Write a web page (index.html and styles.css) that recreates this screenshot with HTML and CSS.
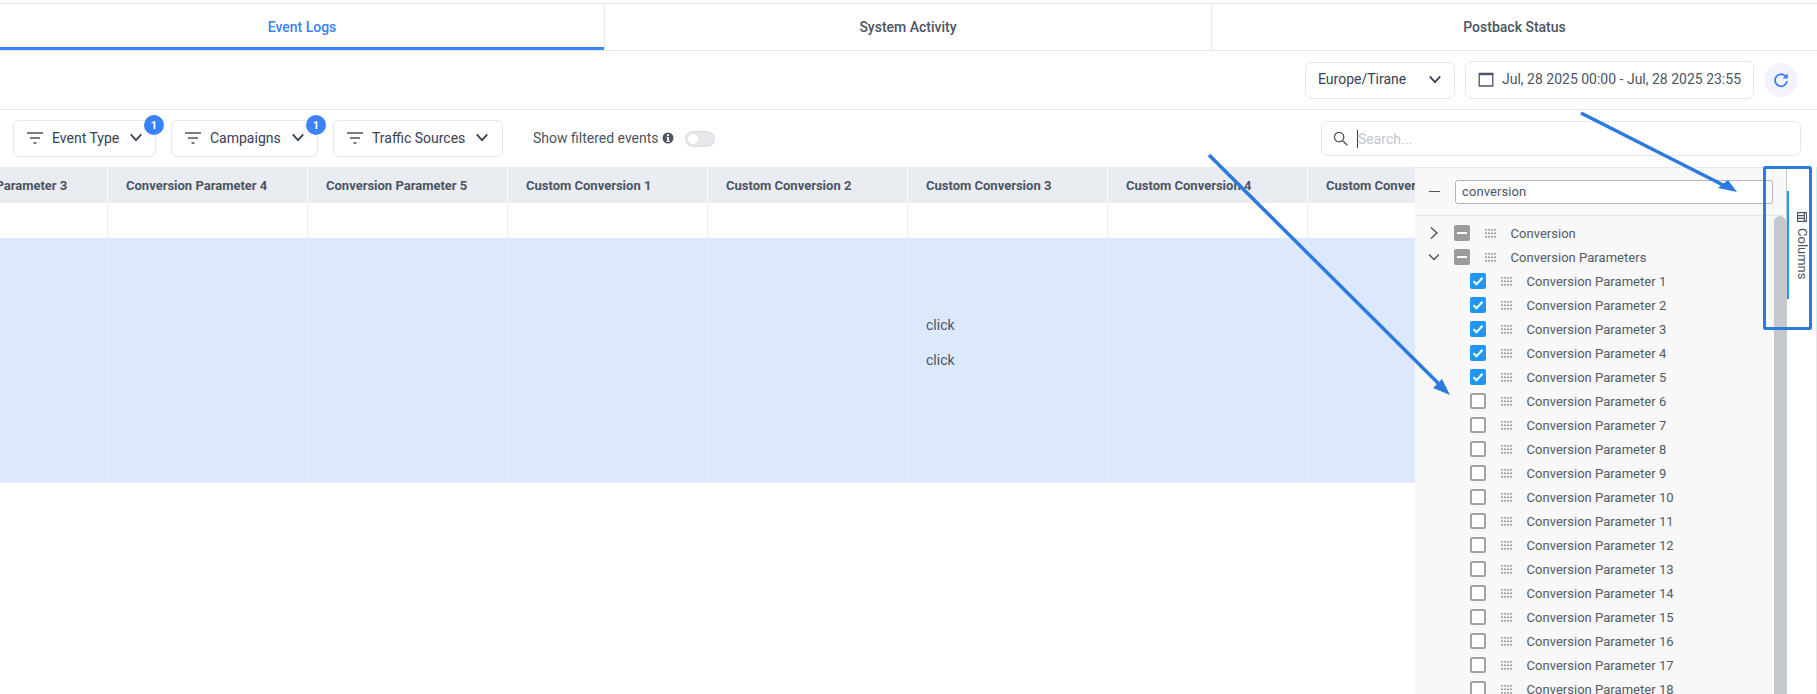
FILE: index.html
```html
<!DOCTYPE html>
<html lang="en">
<head>
<meta charset="utf-8">
<title>Event Logs</title>
<link rel="stylesheet" href="styles.css">
</head>
<body>
<svg class="defs" width="0" height="0" aria-hidden="true">
  <symbol id="grip" viewBox="0 0 11 9"><g fill="#9ca0a6"><rect x="0" y="0" width="2" height="1.6"/><rect x="3" y="0" width="2" height="1.6"/><rect x="6" y="0" width="2" height="1.6"/><rect x="9" y="0" width="2" height="1.6"/><rect x="0" y="3.5" width="2" height="1.6"/><rect x="3" y="3.5" width="2" height="1.6"/><rect x="6" y="3.5" width="2" height="1.6"/><rect x="9" y="3.5" width="2" height="1.6"/><rect x="0" y="7" width="2" height="1.6"/><rect x="3" y="7" width="2" height="1.6"/><rect x="6" y="7" width="2" height="1.6"/><rect x="9" y="7" width="2" height="1.6"/></g></symbol>
  <symbol id="chev" viewBox="0 0 16 10"><path d="M2 1.5 8 8l6-6.500" fill="none" stroke="#374151" stroke-width="2"/></symbol>
  <symbol id="filter" viewBox="0 0 16 12"><path d="M0 1h16M3 6h10M6.500 11h3" fill="none" stroke="#4b5563" stroke-width="1.500"/></symbol>
</svg>
<div class="page">
  <nav class="tabs">
    <div class="tab tab-active">Event Logs</div>
    <div class="tab">System Activity</div>
    <div class="tab">Postback Status</div>
  </nav>
  <div class="datebar">
    <div class="box tz">Europe/Tirane<svg class="chev"><use href="#chev"/></svg></div>
    <div class="box range">
      <svg class="cal" viewBox="0 0 16 16"><path d="M1.200 2.500h13.600v12.500H1.200z" fill="none" stroke="#4b5563" stroke-width="1.300"/><path d="M1.200 2h13.600v2.200H1.200z" fill="#4b5563"/></svg>
      <span>Jul, 28 2025 00:00 - Jul, 28 2025 23:55</span>
    </div>
    <div class="refresh"><svg viewBox="0 0 16 16" class="refresh-icon"><path d="M14 9.200A6 6 0 1 1 12.300 4" fill="none" stroke="#3b82f6" stroke-width="1.800"/><path d="M14.800 1.200v5.300H9.500z" fill="#3b82f6"/></svg></div>
  </div>
  <div class="filterbar">
    <div class="box filter f1"><svg class="filter-icon"><use href="#filter"/></svg>Event Type<svg class="chev"><use href="#chev"/></svg><span class="badge">1</span></div>
    <div class="box filter f2"><svg class="filter-icon"><use href="#filter"/></svg>Campaigns<svg class="chev"><use href="#chev"/></svg><span class="badge">1</span></div>
    <div class="box filter f3"><svg class="filter-icon"><use href="#filter"/></svg>Traffic Sources<svg class="chev"><use href="#chev"/></svg></div>
    <div class="show">Show filtered events<svg class="info" viewBox="0 0 12 12"><circle cx="6" cy="6" r="5.500" fill="#4b5563"/><rect x="5" y="2.200" width="2" height="1.800" fill="#fff"/><path d="M4.400 5h2.600v3.800h.8v1H4.400v-1h.8V6h-.8z" fill="#fff"/></svg><span class="toggle"><span class="knob"></span></span></div>
    <div class="box search">
      <svg class="search-icon" viewBox="0 0 16 16"><circle cx="6.500" cy="6.500" r="5" fill="none" stroke="#4b5563" stroke-width="1.400"/><path d="m10.300 10.300 5 5" stroke="#4b5563" stroke-width="1.500"/></svg>
      <span class="caret"></span><span class="placeholder">Search...</span>
    </div>
  </div>
  <div class="content">
    <div class="grid">
      <div class="row head">
        <div class="cell">Conversion Parameter 3</div>
        <div class="cell">Conversion Parameter 4</div>
        <div class="cell">Conversion Parameter 5</div>
        <div class="cell">Custom Conversion 1</div>
        <div class="cell">Custom Conversion 2</div>
        <div class="cell">Custom Conversion 3</div>
        <div class="cell">Custom Conversion 4</div>
        <div class="cell">Custom Conversion 5</div>
      </div>
      <div class="row blank">
        <div class="cell"></div><div class="cell"></div><div class="cell"></div><div class="cell"></div><div class="cell"></div><div class="cell"></div><div class="cell"></div><div class="cell"></div>
      </div>
      <div class="row selected">
        <div class="cell"></div><div class="cell"></div><div class="cell"></div><div class="cell"></div><div class="cell"></div>
        <div class="cell clicks"><p>click</p><p>click</p></div>
        <div class="cell"></div><div class="cell"></div>
      </div>
    </div>
    <aside class="panel">
      <div class="panel-head">
        <span class="dash"></span>
        <div class="panel-input">conversion</div>
      </div>
      <div class="panel-body">
        <div class="list">
          <div class="item group"><svg class="tree" viewBox="0 0 10 14"><path d="M2 1.500 8 7l-6 5.500" fill="none" stroke="#4b5563" stroke-width="1.400"/></svg><span class="check mixed"></span><svg class="grip"><use href="#grip"/></svg><span>Conversion</span></div>
          <div class="item group"><svg class="tree" viewBox="0 0 10 14"><path d="M0 4.500 5 9.500l5-5" fill="none" stroke="#4b5563" stroke-width="1.400"/></svg><span class="check mixed"></span><svg class="grip"><use href="#grip"/></svg><span>Conversion Parameters</span></div>
          <div class="item child"><span class="check on"><svg viewBox="0 0 16 16"><path d="m3.500 8.300 3 3 6-6.500" fill="none" stroke="#fff" stroke-width="2"/></svg></span><svg class="grip"><use href="#grip"/></svg><span>Conversion Parameter 1</span></div>
          <div class="item child"><span class="check on"><svg viewBox="0 0 16 16"><path d="m3.500 8.300 3 3 6-6.500" fill="none" stroke="#fff" stroke-width="2"/></svg></span><svg class="grip"><use href="#grip"/></svg><span>Conversion Parameter 2</span></div>
          <div class="item child"><span class="check on"><svg viewBox="0 0 16 16"><path d="m3.500 8.300 3 3 6-6.500" fill="none" stroke="#fff" stroke-width="2"/></svg></span><svg class="grip"><use href="#grip"/></svg><span>Conversion Parameter 3</span></div>
          <div class="item child"><span class="check on"><svg viewBox="0 0 16 16"><path d="m3.500 8.300 3 3 6-6.500" fill="none" stroke="#fff" stroke-width="2"/></svg></span><svg class="grip"><use href="#grip"/></svg><span>Conversion Parameter 4</span></div>
          <div class="item child"><span class="check on"><svg viewBox="0 0 16 16"><path d="m3.500 8.300 3 3 6-6.500" fill="none" stroke="#fff" stroke-width="2"/></svg></span><svg class="grip"><use href="#grip"/></svg><span>Conversion Parameter 5</span></div>
          <div class="item child"><span class="check"></span><svg class="grip"><use href="#grip"/></svg><span>Conversion Parameter 6</span></div>
          <div class="item child"><span class="check"></span><svg class="grip"><use href="#grip"/></svg><span>Conversion Parameter 7</span></div>
          <div class="item child"><span class="check"></span><svg class="grip"><use href="#grip"/></svg><span>Conversion Parameter 8</span></div>
          <div class="item child"><span class="check"></span><svg class="grip"><use href="#grip"/></svg><span>Conversion Parameter 9</span></div>
          <div class="item child"><span class="check"></span><svg class="grip"><use href="#grip"/></svg><span>Conversion Parameter 10</span></div>
          <div class="item child"><span class="check"></span><svg class="grip"><use href="#grip"/></svg><span>Conversion Parameter 11</span></div>
          <div class="item child"><span class="check"></span><svg class="grip"><use href="#grip"/></svg><span>Conversion Parameter 12</span></div>
          <div class="item child"><span class="check"></span><svg class="grip"><use href="#grip"/></svg><span>Conversion Parameter 13</span></div>
          <div class="item child"><span class="check"></span><svg class="grip"><use href="#grip"/></svg><span>Conversion Parameter 14</span></div>
          <div class="item child"><span class="check"></span><svg class="grip"><use href="#grip"/></svg><span>Conversion Parameter 15</span></div>
          <div class="item child"><span class="check"></span><svg class="grip"><use href="#grip"/></svg><span>Conversion Parameter 16</span></div>
          <div class="item child"><span class="check"></span><svg class="grip"><use href="#grip"/></svg><span>Conversion Parameter 17</span></div>
          <div class="item child"><span class="check"></span><svg class="grip"><use href="#grip"/></svg><span>Conversion Parameter 18</span></div>
        </div>
        <div class="scrollbar"></div>
      </div>
    </aside>
    <div class="sidetab">
      <div class="sidetab-btn">
        <svg class="col-icon" viewBox="0 0 10 10"><path d="M.6.6h8.800v8.800H.6zM.6 2.600h8.800M3.600 2.600v6.800M6.400 2.600v6.800" fill="none" stroke="#4b5563" stroke-width="1.100"/></svg>
        <span>Columns</span>
      </div>
    </div>
  </div>
  <svg class="annotations" viewBox="0 0 1817 694" width="1817" height="694" aria-hidden="true">
    <g fill="#2b7adf">
      <path d="M1581 113 1725 186" stroke="#2b7adf" stroke-width="3.500" fill="none"/>
      <path d="M1737 192 1718 188 1728 180z"/>
      <path d="M1209 155 1440 385" stroke="#2b7adf" stroke-width="3.500" fill="none"/>
      <path d="M1450 395 1433 388 1442 379z"/>
    </g>
    <rect x="1764.500" y="167.500" width="46" height="161" rx="1" fill="none" stroke="#2b7adf" stroke-width="3"/>
  </svg>
</div>
</body>
</html>
```

FILE: styles.css
```css
* { box-sizing: border-box; }
html, body { margin: 0; padding: 0; background: #fff; }
body { font-family: Roboto, "Liberation Sans", sans-serif; color: #4b5563; overflow: hidden; }
.defs { position: absolute; }
.page { position: relative; width: 1817px; height: 694px; overflow: hidden; display: flex; flex-direction: column; padding-top: 3px; }

.tabs { display: grid; grid-template-columns: 604px 607px 1fr; height: 48px; border-top: 1px solid #e5e7eb; border-bottom: 1px solid #e5e7eb; flex: none; }
.tab { display: flex; align-items: center; justify-content: center; font-size: 14px; font-weight: 500; color: #4b5563; border-left: 1px solid #e5e7eb; height: 46px; padding-bottom: 1px; }
.tab:first-child { border-left: 0; }
.tab-active { color: #3b82f6; box-shadow: inset 0 -3px 0 #3b82f6; }

.box { border: 1px solid #e5e7eb; border-radius: 6px; background: #fff; display: flex; align-items: center; font-size: 14px; }

.datebar { flex: none; height: 59px; border-bottom: 1px solid #e5e7eb; display: flex; align-items: center; justify-content: flex-end; padding-right: 19px; }
.chev { width: 14px; height: 9px; flex: none; }
.tz { width: 150px; height: 37px; padding: 0 12px 2px 12px; justify-content: space-between; color: #374151; }
.range { width: 289px; height: 38px; margin-left: 10px; padding: 0 0 2px 12px; gap: 8px; color: #4b5563; }
.cal { width: 16px; height: 16px; flex: none; }
.refresh { width: 34px; height: 34px; border-radius: 50%; background: #f3f4fb; margin-left: 10px; display: flex; align-items: center; justify-content: center; }
.refresh-icon { width: 16px; height: 16px; }

.filterbar { flex: none; height: 57px; display: flex; align-items: center; padding: 0 16px 0 13px; }
.filter { height: 37px; position: relative; color: #374151; padding: 0 0 2px 13px; }
.f1 { width: 143px; }
.f2 { width: 147px; margin-left: 15px; }
.f3 { width: 170px; margin-left: 15px; }
.filter-icon { width: 16px; height: 12px; margin-right: 9px; flex: none; }
.filter .chev { margin-left: 10px; }
.badge { position: absolute; top: -6px; right: -9px; width: 20px; height: 20px; border-radius: 50%; background: #3b82f6; color: #fff; font-size: 11px; font-weight: 700; display: flex; align-items: center; justify-content: center; }
.show { margin-left: 30px; padding-bottom: 2px; display: flex; align-items: center; font-size: 14px; color: #4b5563; }
.info { width: 12px; height: 12px; margin-left: 3px; }
.toggle { width: 30px; height: 16px; border-radius: 8px; background: #e5e7eb; margin: 2px 0 0 11px; padding: 2px; display: block; border: 1px solid #d9dce1; }
.knob { display: block; width: 10px; height: 10px; border-radius: 50%; background: #fff; }
.search { width: 480px; height: 35px; margin-left: auto; padding-left: 11px; }
.search-icon { width: 15px; height: 15px; flex: none; }
.caret { width: 1px; height: 18px; background: #374151; margin-left: 9px; flex: none; }
.placeholder { color: #c3c7cd; font-size: 14px; }

.content { flex: 1; min-height: 0; display: flex; border-right: 1px solid #e5e7eb; }
.grid { width: 1415px; flex: none; overflow: hidden; }
.row { display: flex; margin-left: -92px; }
.cell { width: 200px; flex: none; border-right: 1px solid #e8ebf0; padding-left: 18px; }
.head { height: 36px; background: #e9ecf1; align-items: center; }
.head .cell { font-size: 13px; font-weight: 700; color: #4b5563; height: 100%; display: flex; align-items: center; border-right-color: #fff; white-space: nowrap; }
.blank { height: 35px; }
.selected { height: 245px; background: #dce8fd; border-bottom: 1px solid #e8ebf0; }
.selected .cell { border-right-color: #e6eefb; }
.clicks { display: flex; flex-direction: column; justify-content: center; gap: 18px; font-size: 14px; color: #4b5563; padding-bottom: 35px; }
.clicks p { margin: 0; line-height: 17px; }

.panel { width: 371px; flex: none; background: #f8f8f8; border-top: 1px solid #e4e6ec; display: flex; flex-direction: column; min-height: 0; }
.panel-head { flex: none; height: 48px; border-bottom: 1px solid #e2e4ea; display: flex; align-items: center; padding-left: 14px; }
.dash { width: 11px; height: 1.500px; background: #4b5563; flex: none; }
.panel-input { width: 318px; height: 24px; margin-left: 15px; border: 1px solid #b2b4c4; border-radius: 3px; background: #fff; padding-left: 6px; font-size: 13px; line-height: 22px; color: #4b5563; letter-spacing: .1px; }
.panel-body { flex: 1; min-height: 0; display: flex; justify-content: space-between; overflow: hidden; }
.list { padding-top: 5px; }
.item { height: 24px; display: flex; align-items: center; font-size: 13px; color: #525a66; letter-spacing: .03px; white-space: nowrap; }
.group { padding-left: 14px; }
.child { padding-left: 55px; }
.tree { width: 10px; height: 14px; flex: none; margin-right: 15px; }
.check { width: 16px; height: 16px; flex: none; border-radius: 2px; border: 2px solid #a3a3a3; background: #fff; display: block; }
.check.on { background: #2196f3; border: 0; }
.check.on svg { display: block; width: 16px; height: 16px; }
.check.mixed { background: #9b9b9b; border: 0; position: relative; }
.check.mixed::after { content: ""; position: absolute; left: 3px; right: 3px; top: 7px; height: 2px; background: #fff; }
.grip { width: 11px; height: 9px; flex: none; margin: 0 14.500px 0 15px; }
.scrollbar { width: 12px; flex: none; background: #c4c7cb; border-radius: 6px 6px 0 0; }

.sidetab { flex: 1; border-left: 1px solid #c9ccd1; }
.sidetab-btn { margin-top: 24px; height: 108px; border-left: 2px solid #2196f3; display: flex; flex-direction: column; align-items: flex-start; gap: 6px; padding: 21px 0 0 6px; font-size: 13px; color: #4b5563; }
.col-icon { width: 10px; height: 10px; margin-left: 2px; transform: rotate(90deg); flex: none; }
.sidetab-btn span { writing-mode: vertical-rl; line-height: 14px; white-space: nowrap; }

.annotations { position: absolute; left: 0; top: 0; pointer-events: none; }
```
